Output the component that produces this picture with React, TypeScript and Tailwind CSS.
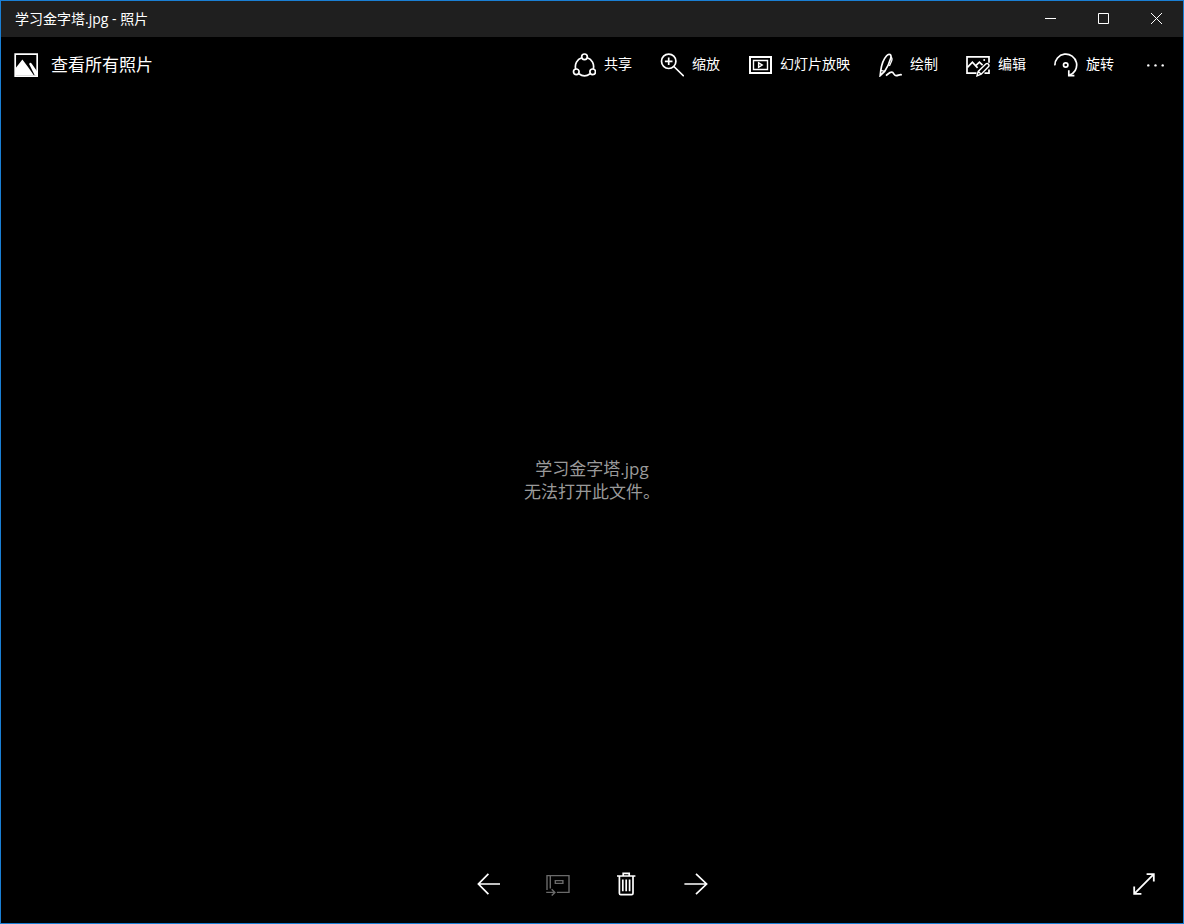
import React from 'react';

type IconProps = {
  children: React.ReactNode;
  className?: string;
};

const Icon: React.FC<IconProps> = ({ children, className = '' }) => (
  <svg
    viewBox="0 0 24 24"
    fill="none"
    stroke="currentColor"
    strokeWidth="1.7"
    aria-hidden="true"
    className={`size-6 shrink-0 ${className}`}
  >
    {children}
  </svg>
);

const tools = [
  {
    label: '共享',
    icon: (
      <>
        <circle cx="12.5" cy="3.8" r="2.8" />
        <circle cx="4.3" cy="18.8" r="2.8" />
        <circle cx="20.7" cy="18.8" r="2.8" />
        <path d="M9.7 4.8A9.3 9.3 0 0 0 3.7 16M15.3 4.8a9.3 9.3 0 0 1 6 11.2M6.9 20.7a9.4 9.4 0 0 0 11.2 0" />
      </>
    ),
  },
  {
    label: '缩放',
    icon: (
      <>
        <circle cx="8.7" cy="8.3" r="7.2" />
        <path d="M13.9 13.5 23.8 23.2M8.7 4.5v7.6M4.9 8.3h7.6" />
      </>
    ),
  },
  {
    label: '幻灯片放映',
    icon: (
      <>
        <path d="M2 4h21v16H2z" strokeWidth="2" />
        <path d="M5.5 7.5h14v9h-14z" strokeWidth="1.4" />
        <path d="M10.6 9.8v4.4l3.6-2.2z" strokeWidth="1.4" />
      </>
    ),
  },
  {
    label: '绘制',
    icon: (
      <>
        <path d="M2.2 22.6 2.8 17.4C3.6 11.4 5.6 6.2 8.6 2.8c1.2-1.4 2.4-1.8 3.4-1.2 1.2.7 1.2 2 .8 3.4C11.6 9.4 9.6 14 6.6 18.4Z" />
        <path d="M12.8 4c1.8.9 1.4 2.4.8 4l-2.2 5M2.8 17.4l3.8 1" strokeWidth="1.3" />
        <path d="M8 22.6c2.2-1.6 3.6-3.6 5.8-3.4 2.2.3 1.8 3.2 4.2 3.4 2.4.1 3.2-1.4 5.8-.8" />
      </>
    ),
  },
  {
    label: '编辑',
    icon: (
      <>
        <path d="M10.5 20.2H1V3.8h22v6M23 16.5v3.7h-4.5" />
        <path d="m1.4 14.4 5-5.2 5.2 5.6M9.8 12.6l3.6-3.4 3.2 3" />
        <path d="m11 22.8 1.2-4.4 7.6-7.4c1.8-1.4 4 .8 2.8 2.6l-7.4 7.6ZM12.4 18.6l2.8 2.6" strokeWidth="1.4" />
        <circle cx="18.2" cy="7" r="1" fill="currentColor" stroke="none" />
      </>
    ),
  },
  {
    label: '旋转',
    icon: (
      <>
        <path d="M.9 12.4A10.9 10.9 0 1 1 15 22.4" />
        <path d="M14.8 17.2v5.5h5.6" />
        <circle cx="11.7" cy="12" r="2.2" />
      </>
    ),
  },
];

const captionButtons = [
  { label: '最小化', icon: <path d="M2 6.5h11" /> },
  { label: '最大化', icon: <path d="M2.5 1.5h10v10h-10z" /> },
  { label: '关闭', icon: <path d="m2 1 11 11M13 1 2 12" /> },
];

const TitleBar: React.FC = () => (
  <header className="flex h-9 items-center justify-between bg-[#1f1f1f] pl-[14px]">
    <h1 className="text-sm">学习金字塔.jpg - 照片</h1>
    <div className="flex h-full">
      {captionButtons.map((button) => (
        <button
          key={button.label}
          type="button"
          aria-label={button.label}
          className="flex h-full w-[53px] items-center justify-center hover:bg-white/10"
        >
          <svg viewBox="0 0 15 15" fill="none" stroke="currentColor" className="size-[15px]" aria-hidden="true">
            {button.icon}
          </svg>
        </button>
      ))}
    </div>
  </header>
);

const Toolbar: React.FC = () => (
  <nav className="flex h-14 items-center justify-between pl-[13px]">
    <a href="#all" className="flex items-center gap-[13px] text-[17px]">
      <Icon>
        <path d="M1.2 1.2h22v22h-22z" />
        <path
          d="M1.5 15.2 8.4 6.6l5.8 7.6 5.8 8.2h.8l-5.6-11.2c.2-1.8 1.4-2 2.4-.8l5.6 8.2v4H1.5z"
          fill="currentColor"
          stroke="none"
        />
      </Icon>
      查看所有照片
    </a>
    <div className="flex h-full items-center">
      {tools.map((tool) => (
        <button
          key={tool.label}
          type="button"
          className="flex h-full items-center gap-2 px-[14px] text-sm hover:bg-white/10"
        >
          <Icon>{tool.icon}</Icon>
          <span className="pb-0.5">{tool.label}</span>
        </button>
      ))}
      <button
        type="button"
        aria-label="查看更多"
        className="flex h-full w-[55px] items-center justify-center hover:bg-white/10"
      >
        <Icon>
          <g fill="currentColor" stroke="none">
            <circle cx="4.3" cy="12.4" r="1.2" />
            <circle cx="11.5" cy="12.4" r="1.2" />
            <circle cx="18.7" cy="12.4" r="1.2" />
          </g>
        </Icon>
      </button>
    </div>
  </nav>
);

const BottomBar: React.FC = () => (
  <footer className="grid h-[78px] grid-cols-[1fr_auto_1fr] items-center">
    <div className="col-start-2 flex">
      <button type="button" aria-label="上一张" className="flex h-12 w-[69px] items-center justify-center">
        <Icon>
          <path d="M23 12H1.2M11.4 1.8 1.4 12l10 10.2" />
        </Icon>
      </button>
      <button
        type="button"
        aria-label="添加到"
        disabled
        className="flex h-12 w-[69px] items-center justify-center text-[#6a6a6a]"
      >
        <Icon>
          <g strokeWidth="1.4">
            <path d="M1 18V3.6h22v16.8H10.9M4.3 3.6v13" />
            <path d="M9.3 8.6h7.6v2.8H9.3z" />
            <path d="M.2 20.4h8.5M5.7 17.2l3.2 3.2-3.2 3.2" />
          </g>
        </Icon>
      </button>
      <button type="button" aria-label="删除" className="flex h-12 w-[69px] items-center justify-center">
        <Icon>
          <path d="M2 4h18.4M8.2 4V1.4h6V4" />
          <path d="M4.4 4v17.2c0 .9.6 1.4 1.4 1.4h10.8c.8 0 1.4-.5 1.4-1.4V4" />
          <path d="M7.8 7.4v11.8M11.2 7.4v11.8M14.6 7.4v11.8" />
        </Icon>
      </button>
      <button type="button" aria-label="下一张" className="flex h-12 w-[69px] items-center justify-center">
        <Icon>
          <path d="M.4 12h22.4M12 1.8 22.6 12 12 22.2" />
        </Icon>
      </button>
    </div>
    <button type="button" aria-label="全屏" className="mr-[15px] flex size-12 items-center justify-center justify-self-end">
      <Icon>
        <path d="M2.2 21.8 21.8 2.2M14.6 2.2h7.2v7.2M2.2 14.6v7.2h7.2" strokeWidth="1.8" />
      </Icon>
    </button>
  </footer>
);

const App: React.FC = () => (
  <div className="flex min-h-screen flex-col border border-[#1a7fd4] bg-black font-['Open_Sans','Noto_Sans_CJK_SC',sans-serif] text-white">
    <TitleBar />
    <Toolbar />
    {/* Error message, shown in place of the photo */}
    <main className="flex flex-1 flex-col items-center justify-center pt-[22px] text-center text-[17px] leading-[23px] text-[#9a9a9a]">
      <p>学习金字塔.jpg</p>
      <p>无法打开此文件。</p>
    </main>
    <BottomBar />
  </div>
);

export default App;
